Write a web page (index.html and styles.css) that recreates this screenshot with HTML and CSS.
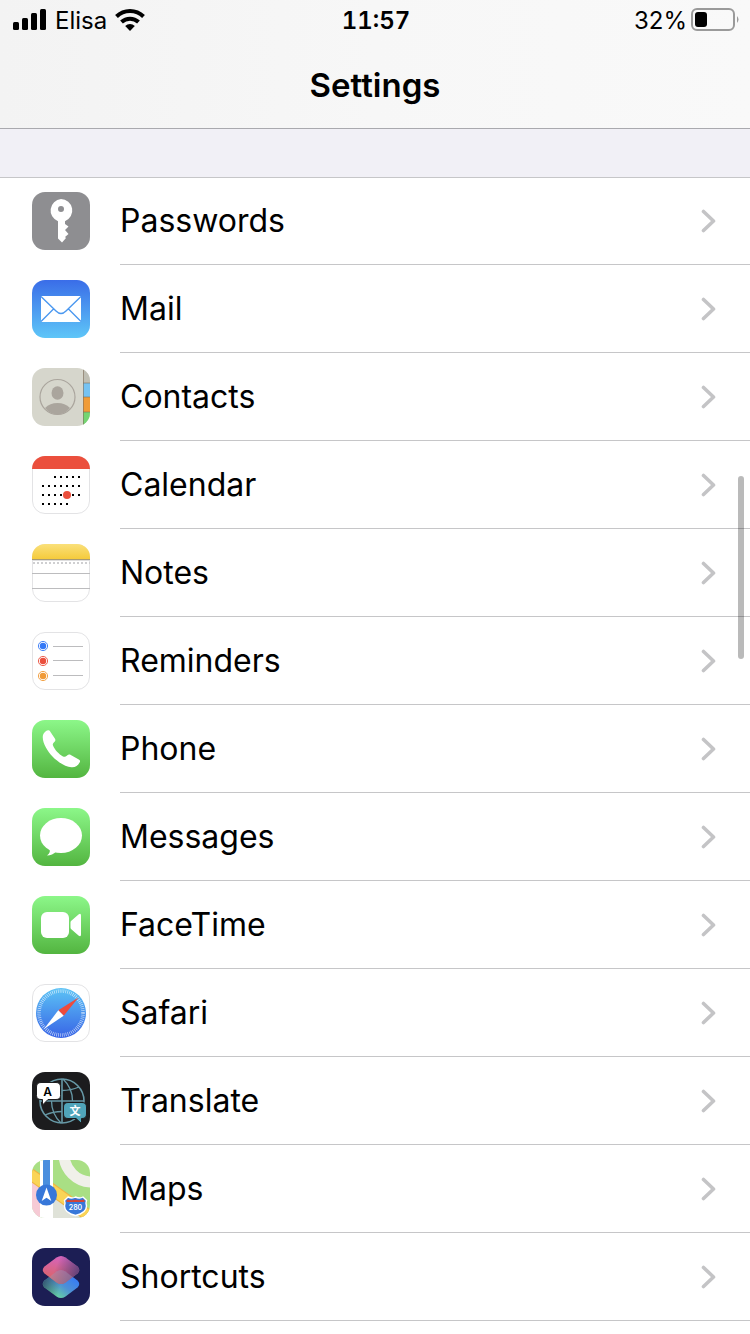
FILE: index.html
```html
<!DOCTYPE html>
<html lang="en">
<head>
    <meta charset="UTF-8">
    <meta name="viewport" content="width=device-width, initial-scale=1.0">
    <title>Settings</title>
    <link rel="stylesheet" href="styles.css">
</head>
<body>
    <!-- Shared shapes and gradients -->
    <svg class="defs" width="0" height="0" aria-hidden="true">
        <defs>
            <clipPath id="tile"><rect width="58" height="58" rx="13"/></clipPath>
            <linearGradient id="green" x1="0" y1="0" x2="0" y2="1">
                <stop offset="0" stop-color="#8cf789"/>
                <stop offset="1" stop-color="#53b540"/>
            </linearGradient>
            <linearGradient id="mail-bg" x1="0" y1="0" x2="0" y2="1">
                <stop offset="0" stop-color="#3a6de8"/>
                <stop offset="1" stop-color="#5ec6f8"/>
            </linearGradient>
            <linearGradient id="notes-bg" x1="0" y1="0" x2="0" y2="1">
                <stop offset="0" stop-color="#fae07a"/>
                <stop offset="1" stop-color="#f5cb3c"/>
            </linearGradient>
            <linearGradient id="safari-bg" x1="0" y1="0" x2="0" y2="1">
                <stop offset="0" stop-color="#5cc3f5"/>
                <stop offset="1" stop-color="#3864e6"/>
            </linearGradient>
            <linearGradient id="short-top" x1="0.6" y1="0" x2="0.4" y2="1">
                <stop offset="0" stop-color="#e56bcc"/>
                <stop offset="1" stop-color="#ec6b5a"/>
            </linearGradient>
            <linearGradient id="short-shade" x1="0.35" y1="0.4" x2="1" y2="0.6">
                <stop offset="0" stop-color="#55407c" stop-opacity="0"/>
                <stop offset="1" stop-color="#55407c" stop-opacity="0.9"/>
            </linearGradient>
            <linearGradient id="short-bottom" x1="0.9" y1="0.3" x2="0.3" y2="0.9">
                <stop offset="0" stop-color="#377bf5"/>
                <stop offset="0.5" stop-color="#4e91d5"/>
                <stop offset="1" stop-color="#68d4a0"/>
            </linearGradient>
            <linearGradient id="short-dark" x1="0" y1="0.4" x2="0.5" y2="0.5">
                <stop offset="0" stop-color="#2f4a6c" stop-opacity="0.9"/>
                <stop offset="1" stop-color="#2f4a6c" stop-opacity="0"/>
            </linearGradient>
            <symbol id="chevron" viewBox="0 0 16 24">
                <path d="M2.500 2.500l10 9.500-10 9.500" fill="none" stroke="#c4c4c6" stroke-width="3.600" stroke-linecap="round" stroke-linejoin="round"/>
            </symbol>
        </defs>
    </svg>

    <header class="top-bar">
        <div class="status-bar">
            <div class="status-left">
                <svg class="signal" viewBox="0 0 34 24" aria-hidden="true">
                    <rect x="0" y="13" width="6" height="8" rx="1.5"/>
                    <rect x="9" y="9" width="6" height="12" rx="1.5"/>
                    <rect x="18" y="4" width="6" height="17" rx="1.5"/>
                    <rect x="27" y="0" width="6" height="21" rx="1.5"/>
                </svg>
                <span>Elisa</span>
                <svg class="wifi" viewBox="0 0 30 24" aria-hidden="true">
                    <path d="M1.500 7.500a19.400 19.400 0 0 1 27 0" fill="none" stroke="#000" stroke-width="4"/>
                    <path d="M6.500 13a12.400 12.400 0 0 1 17 0" fill="none" stroke="#000" stroke-width="4"/>
                    <path d="M10.200 17a7 7 0 0 1 9.600 0L15 22z"/>
                </svg>
            </div>
            <div class="time">11:57</div>
            <div class="status-right">
                <span>32%</span>
                <svg class="battery" viewBox="0 0 48 26" aria-hidden="true">
                    <rect x="1" y="1" width="42" height="21" rx="5" fill="none" stroke="#9a9a9a" stroke-width="2"/>
                    <rect x="4" y="4" width="12" height="15" rx="3"/>
                    <path d="M46 8q3 3.500 0 7z" fill="#9a9a9a"/>
                </svg>
            </div>
        </div>
        <h1>Settings</h1>
    </header>

    <main>
        <nav class="settings-list" aria-label="Settings">
            <a href="#passwords" class="row">
                <svg class="icon" viewBox="0 0 58 58" aria-hidden="true">
                    <rect width="58" height="58" rx="13" fill="#8e8e91"/>
                    <path fill="#fff" fill-rule="evenodd" d="M29 7a11.500 11.500 0 0 1 4 22.200V32l3.500 2.500-3.500 3.500 3.500 4-3.500 3 1 1-4 4.500-4-4V29.200A11.500 11.500 0 0 1 29 7zm0 7a3 3 0 1 0 0 6 3 3 0 0 0 0-6z"/>
                </svg>
                <span class="label">Passwords</span>
                <svg class="chevron" aria-hidden="true"><use href="#chevron"/></svg>
            </a>
            <a href="#mail" class="row">
                <svg class="icon" viewBox="0 0 58 58" aria-hidden="true">
                    <rect width="58" height="58" rx="13" fill="url(#mail-bg)"/>
                    <rect x="9" y="16" width="40" height="26" rx="1" fill="#fff"/>
                    <path d="M9 16.500l15 14.500q5 5 10 0l15-14.500M9 41.500L21.500 29M49 41.500L36.500 29" fill="none" stroke="#4b98f0" stroke-width="1.400"/>
                </svg>
                <span class="label">Mail</span>
                <svg class="chevron" aria-hidden="true"><use href="#chevron"/></svg>
            </a>
            <a href="#contacts" class="row">
                <svg class="icon" viewBox="0 0 58 58" aria-hidden="true">
                    <g clip-path="url(#tile)">
                        <rect width="58" height="58" fill="#d6d6cc"/>
                        <rect x="51" width="7" height="15" fill="#c0bfb4"/>
                        <rect x="51" y="15" width="7" height="14" fill="#76c3f3"/>
                        <rect x="51" y="29" width="7" height="15" fill="#f09c38"/>
                        <rect x="51" y="44" width="7" height="14" fill="#74d572"/>
                        <path d="M51.500 0v58M51 15h7M51 29h7M51 44h7" stroke="#80705c" stroke-opacity="0.600" fill="none"/>
                    </g>
                    <circle cx="25.500" cy="29" r="17.500" fill="none" stroke="#aaa59d" stroke-width="1.200"/>
                    <ellipse cx="25.500" cy="25" rx="6" ry="6.800" fill="#aaa59d"/>
                    <path d="M13 40q5-5 12.500-5T38 40q-5 6.500-12.500 6.500T13 40z" fill="#aaa59d"/>
                </svg>
                <span class="label">Contacts</span>
                <svg class="chevron" aria-hidden="true"><use href="#chevron"/></svg>
            </a>
            <a href="#calendar" class="row">
                <svg class="icon" viewBox="0 0 58 58" aria-hidden="true">
                    <rect x="0.500" y="0.500" width="57" height="57" rx="12.500" fill="#fff" stroke="#e3e3e5"/>
                    <rect width="58" height="13" fill="#eb4f3d" clip-path="url(#tile)"/>
                    <g fill="none" stroke="#000" stroke-width="2" stroke-dasharray="2 4">
                        <path d="M22 21h26"/>
                        <path d="M10 30h38"/>
                        <path d="M10 39h38"/>
                        <path d="M10 48h26"/>
                    </g>
                    <circle cx="35" cy="39" r="4" fill="#eb4f3d"/>
                </svg>
                <span class="label">Calendar</span>
                <svg class="chevron" aria-hidden="true"><use href="#chevron"/></svg>
            </a>
            <a href="#notes" class="row">
                <svg class="icon" viewBox="0 0 58 58" aria-hidden="true">
                    <rect x="0.500" y="0.500" width="57" height="57" rx="12.500" fill="#fff" stroke="#e3e3e5"/>
                    <g clip-path="url(#tile)">
                        <rect width="58" height="15" fill="url(#notes-bg)"/>
                        <path d="M0 15.500h58" stroke="#a89a70"/>
                        <path d="M0 16.500h58" stroke="#dededf"/>
                        <path d="M1 19h57" stroke="#cfcfd1" stroke-width="2" stroke-dasharray="2 2"/>
                        <path d="M0 29.500h58M0 44.500h58" stroke="#bcbcbe"/>
                    </g>
                </svg>
                <span class="label">Notes</span>
                <svg class="chevron" aria-hidden="true"><use href="#chevron"/></svg>
            </a>
            <a href="#reminders" class="row">
                <svg class="icon" viewBox="0 0 58 58" aria-hidden="true">
                    <rect x="0.500" y="0.500" width="57" height="57" rx="12.500" fill="#fff" stroke="#e3e3e5"/>
                    <circle cx="11" cy="14" r="3.200" fill="#3478f6"/>
                    <circle cx="11" cy="14" r="4.600" fill="none" stroke="#3478f6" stroke-width="0.900"/>
                    <circle cx="11" cy="29" r="3.200" fill="#eb4f3d"/>
                    <circle cx="11" cy="29" r="4.600" fill="none" stroke="#eb4f3d" stroke-width="0.900"/>
                    <circle cx="11" cy="44" r="3.200" fill="#f09a37"/>
                    <circle cx="11" cy="44" r="4.600" fill="none" stroke="#f09a37" stroke-width="0.900"/>
                    <path d="M21 14.500h30M21 28.500h30M21 43.500h30" stroke="#bcbcbe"/>
                </svg>
                <span class="label">Reminders</span>
                <svg class="chevron" aria-hidden="true"><use href="#chevron"/></svg>
            </a>
            <a href="#phone" class="row">
                <svg class="icon" viewBox="0 0 58 58" aria-hidden="true">
                    <rect width="58" height="58" rx="13" fill="url(#green)"/>
                    <path fill="#fff" d="M11 15c.500-2 3-4.500 5-4.800 1-.200 1.600.200 2 1l5 7.600c.600 1 .500 1.700-.200 2.600-1.300 1.500-2.500 2.200-1.800 4 1.500 4 6 8.800 10 11 1.600.900 2.600.400 3.800-.700 1.400-1.200 2.500-1.500 4-.700l8 4.500c1.400.800 1.600 1.600.800 3-1.500 3-4.600 5-8.100 4.700-6-.300-13.500-5-19-10.700C15 31 9.500 21.500 11 15z"/>
                </svg>
                <span class="label">Phone</span>
                <svg class="chevron" aria-hidden="true"><use href="#chevron"/></svg>
            </a>
            <a href="#messages" class="row">
                <svg class="icon" viewBox="0 0 58 58" aria-hidden="true">
                    <rect width="58" height="58" rx="13" fill="url(#green)"/>
                    <ellipse cx="29" cy="27.500" rx="21" ry="17.500" fill="#fff"/>
                    <path fill="#fff" d="M17 40q2.500 4-2 7.500 5 0 10-4.500z"/>
                </svg>
                <span class="label">Messages</span>
                <svg class="chevron" aria-hidden="true"><use href="#chevron"/></svg>
            </a>
            <a href="#facetime" class="row">
                <svg class="icon" viewBox="0 0 58 58" aria-hidden="true">
                    <rect width="58" height="58" rx="13" fill="url(#green)"/>
                    <rect x="9" y="16" width="28" height="26" rx="6" fill="#fff"/>
                    <path fill="#fff" d="M38.500 26.500q0-1 .800-1.700l7.200-6.300q2.500-1.800 2.500 1v19q0 2.800-2.500 1l-7.200-6.300q-.800-.700-.800-1.700z"/>
                </svg>
                <span class="label">FaceTime</span>
                <svg class="chevron" aria-hidden="true"><use href="#chevron"/></svg>
            </a>
            <a href="#safari" class="row">
                <svg class="icon" viewBox="0 0 58 58" aria-hidden="true">
                    <rect x="0.500" y="0.500" width="57" height="57" rx="12.500" fill="#fff" stroke="#e3e3e5"/>
                    <circle cx="29" cy="29" r="25" fill="url(#safari-bg)"/>
                    <circle cx="29" cy="29" r="22" fill="none" stroke="#fff" stroke-opacity="0.700" stroke-width="3.600" stroke-dasharray="0.700 1.220"/>
                    <path d="M46.500 13.500L26.300 26.300l5.400 5.400z" fill="#ee4b3c"/>
                    <path d="M12 45l14.300-18.700 5.400 5.400z" fill="#fff"/>
                </svg>
                <span class="label">Safari</span>
                <svg class="chevron" aria-hidden="true"><use href="#chevron"/></svg>
            </a>
            <a href="#translate" class="row">
                <svg class="icon" viewBox="0 0 58 58" aria-hidden="true">
                    <rect width="58" height="58" rx="13" fill="#1c1c1e"/>
                    <g fill="none" stroke="#6698a6" stroke-width="1.600">
                        <circle cx="30" cy="29" r="22"/>
                        <path d="M30 7v44M8 29h44"/>
                        <path d="M31 7q9.500 9 9.500 22M29 51q-9.500-9-9.500-22M30 18.500q9 0 17-3.500M30 39.500q-9 0-17 3.500" stroke-width="1.300"/>
                    </g>
                    <path fill="#fff" stroke="#1c1c1e" d="M9 10.500h15q4.500 0 4.500 4.500v8.500q0 4-4.500 4h-8L10.500 33v-5.500H9q-4.500 0-4.500-4V15q0-4.500 4.500-4.500z"/>
                    <path fill="#50a5ba" stroke="#1c1c1e" d="M36 30.500h14q4.500 0 4.500 4.500v7q0 4.500-4.500 4.500h-.500v5L44 46.500h-8q-4.500 0-4.500-4.500v-7q0-4.500 4.500-4.500z"/>
                    <text class="translate-a" x="15.500" y="23.500">A</text>
                    <text class="translate-b" x="43" y="42.500">文</text>
                </svg>
                <span class="label">Translate</span>
                <svg class="chevron" aria-hidden="true"><use href="#chevron"/></svg>
            </a>
            <a href="#maps" class="row">
                <svg class="icon" viewBox="0 0 58 58" aria-hidden="true">
                    <g clip-path="url(#tile)">
                        <rect width="58" height="58" fill="#a9df84"/>
                        <circle cx="60" cy="-6" r="28" fill="none" stroke="#f0f0e9" stroke-width="11"/>
                        <path d="M0 16l58 40v2H0z" fill="#dfe2d8"/>
                        <path d="M0 22l8 6v30H0z" fill="#f6cad5"/>
                        <path d="M-2 14l62 44" stroke="#efb441" stroke-width="12"/>
                        <path d="M-2 14l62 44" stroke="#fad457" stroke-width="10"/>
                        <rect x="8" width="13" height="58" fill="#fff"/>
                        <rect x="11" width="7" height="36" fill="#4a8ede"/>
                    </g>
                    <circle cx="14.500" cy="35" r="10.500" fill="#3777d9"/>
                    <path d="M14.500 27.500l4.800 13.500-4.800-3.200L9.700 41z" fill="#fff"/>
                    <path d="M36 37q4 2 7.500 0 4 2 7.500 0l3.500 3.500q-1 2 0 5.500 0 7-11 9.500Q32.500 53 32.500 46q1-3.500 0-5.500z" fill="#3777d9" stroke="#fff" stroke-width="1.400"/>
                    <path d="M35.500 39.500q4.500 1.500 8 0 3.500 1.500 8 0l1 1v1.500h-18v-1.500z" fill="#d24437"/>
                    <text class="shield" x="43.500" y="49.500">280</text>
                </svg>
                <span class="label">Maps</span>
                <svg class="chevron" aria-hidden="true"><use href="#chevron"/></svg>
            </a>
            <a href="#shortcuts" class="row">
                <svg class="icon" viewBox="0 0 58 58" aria-hidden="true">
                    <rect width="58" height="58" rx="13" fill="#1c1e54"/>
                    <path d="M24.500 23.500q4.500-3 9 0l12 9q3.500 3.500 0 7l-12 9q-4.500 3-9 0l-12-9q-3.500-3.500 0-7z" fill="url(#short-bottom)"/>
                    <path d="M24.500 23.500q4.500-3 9 0l12 9q3.500 3.500 0 7l-12 9q-4.500 3-9 0l-12-9q-3.500-3.500 0-7z" fill="url(#short-dark)"/>
                    <g opacity="0.920">
                        <path d="M24.500 9.500q4.500-3 9 0l12 9q3.500 3.500 0 7l-12 9q-4.500 3-9 0l-12-9q-3.500-3.500 0-7z" fill="url(#short-top)"/>
                        <path d="M24.500 9.500q4.500-3 9 0l12 9q3.500 3.500 0 7l-12 9q-4.500 3-9 0l-12-9q-3.500-3.500 0-7z" fill="url(#short-shade)"/>
                    </g>
                    <path d="M24.500 23.500q4.500-3 9 0l7 5.500-7 5.500q-4.500 3-9 0l-7-5.500z" fill="#9c8aa8" fill-opacity="0.450"/>
                </svg>
                <span class="label">Shortcuts</span>
                <svg class="chevron" aria-hidden="true"><use href="#chevron"/></svg>
            </a>
        </nav>
    </main>

    <!-- Scroll indicator -->
    <div class="scroll-thumb"></div>
</body>
</html>
```
FILE: styles.css
```css
/* Basic Reset */
* {
    margin: 0;
    padding: 0;
    box-sizing: border-box;
}

body {
    font-family: Inter, "Noto Sans CJK SC", sans-serif;
    background-color: #fff;
    color: #000;
}

.defs {
    position: absolute;
}

/* Header */
.top-bar {
    background: linear-gradient(to right, #f3f3f3, #f7f7f7 50%, #f9f9f9);
    border-bottom: 1px solid #a9a9ae;
}

.status-bar {
    display: grid;
    grid-template-columns: 1fr auto 1fr;
    align-items: center;
    height: 42px;
    padding: 0 11px 0 13px;
    font-size: 24px;
    line-height: 42px;
}

.status-left,
.status-right {
    display: flex;
    align-items: center;
}

.status-left {
    gap: 8px;
}

.status-right {
    justify-content: flex-end;
    gap: 4px;
}

.signal {
    width: 34px;
    height: 24px;
}

.wifi {
    width: 30px;
    height: 24px;
}

.battery {
    width: 48px;
    height: 26px;
}

.time {
    font-weight: 600;
    font-variant-numeric: tabular-nums;
}

.top-bar h1 {
    font-size: 33px;
    font-weight: 600;
    line-height: 86px;
    text-align: center;
}

/* Settings list */
main {
    padding-top: 48px;
    background-color: #f1f0f6;
}

.settings-list {
    background-color: #fff;
    box-shadow: inset 0 1px 0 #c6c6c8;
}

.row {
    display: flex;
    align-items: center;
    height: 88px;
    padding-left: 32px;
    color: inherit;
    text-decoration: none;
    background: linear-gradient(#c6c6c8, #c6c6c8) 120px 100% / 100% 1px no-repeat;
}

.icon {
    flex: none;
    width: 58px;
    height: 58px;
}

.label {
    flex: 1;
    padding-left: 30px;
    font-size: 32px;
    line-height: 40px;
}

.chevron {
    flex: none;
    width: 16px;
    height: 24px;
    margin-right: 33px;
}

/* Lettering inside icons */
.translate-a,
.translate-b,
.shield {
    font-weight: 600;
    text-anchor: middle;
}

.translate-a {
    font-size: 12px;
}

.translate-b {
    font-size: 11px;
    fill: #fff;
}

.shield {
    font-size: 7px;
    fill: #fff;
}

.scroll-thumb {
    position: fixed;
    top: 476px;
    right: 6px;
    width: 6px;
    height: 183px;
    border-radius: 3px;
    background-color: rgba(0, 0, 0, 0.27);
}
```
